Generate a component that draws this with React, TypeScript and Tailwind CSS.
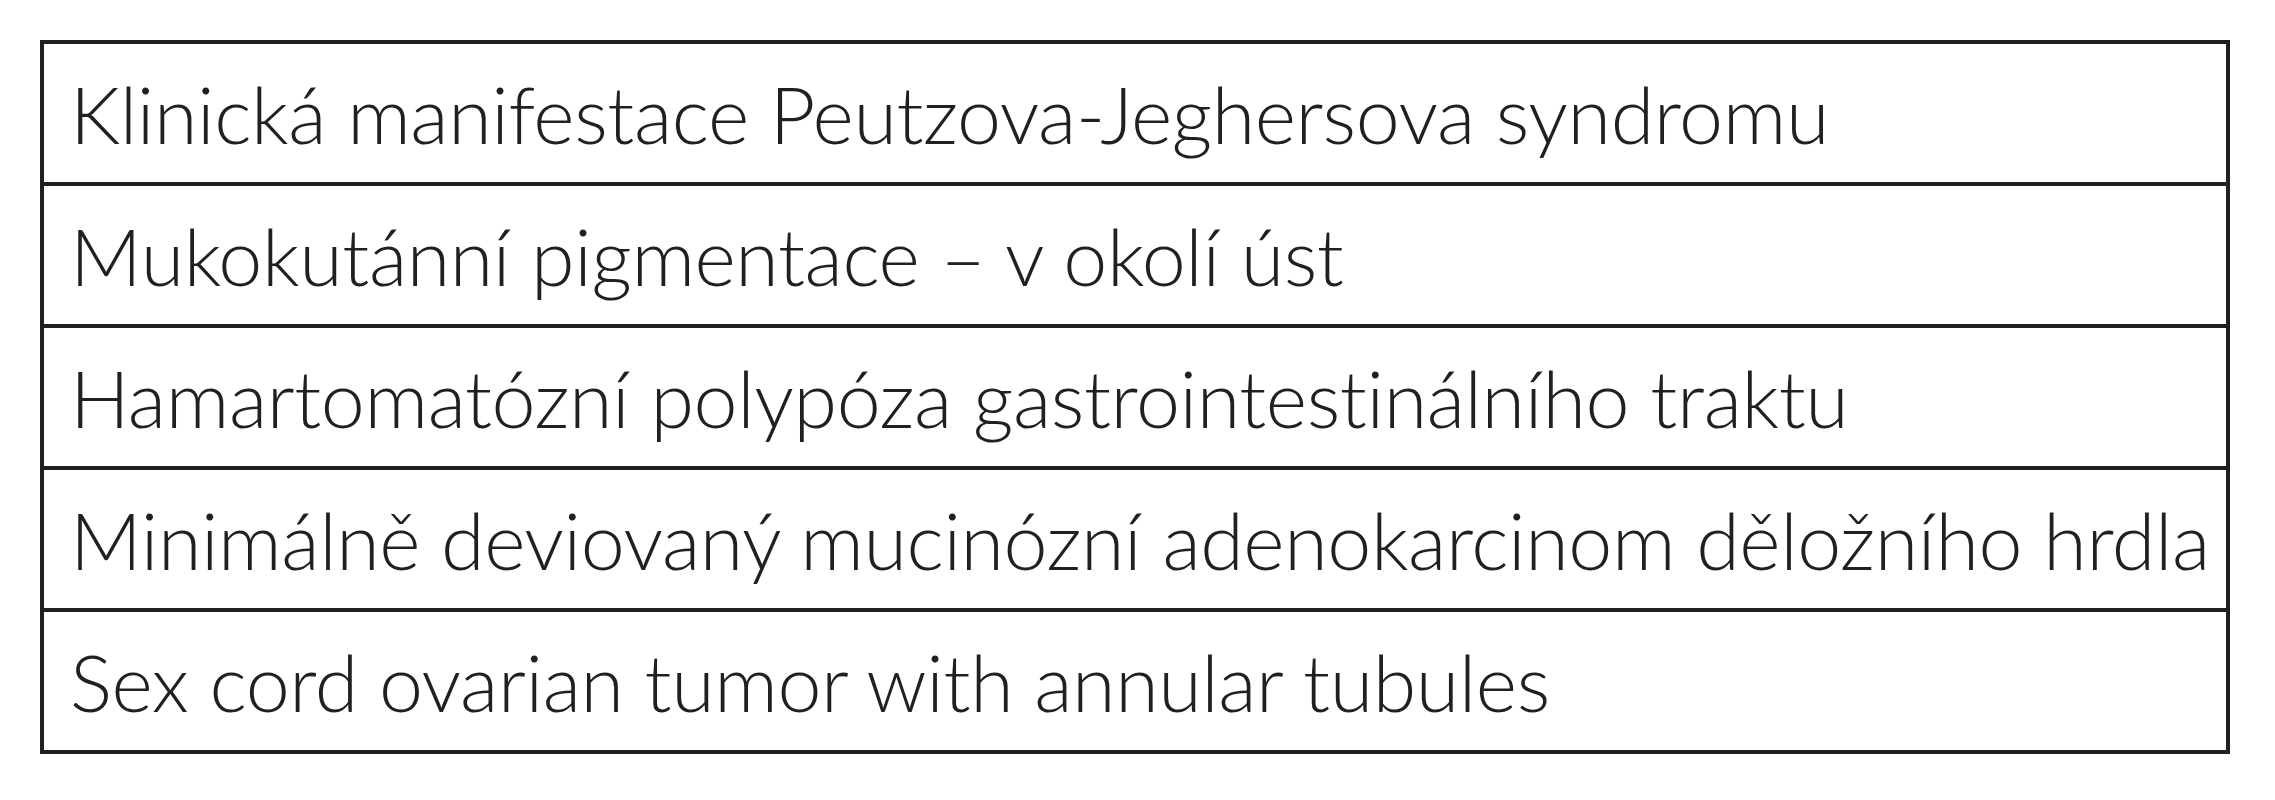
const rows = [
  'Klinická manifestace Peutzova-Jeghersova syndromu',
  'Mukokutánní pigmentace – v okolí úst',
  'Hamartomatózní polypóza gastrointestinálního traktu',
  'Minimálně deviovaný mucinózní adenokarcinom děložního hrdla',
  'Sex cord ovarian tumor with annular tubules',
];

const App = () => {
  return (
    <div className="min-h-screen bg-white pt-[40px] pl-[40px]">
      <div className="w-[2190px] border-4 border-[#231f20]">
        {rows.map((text, i) => (
          <div
            key={i}
            className={
              i < rows.length - 1
                ? 'flex h-[142px] items-center border-b-4 border-[#231f20] pl-[26px]'
                : 'flex h-[138px] items-center pl-[26px]'
            }
          >
            <span className="font-['Lato',sans-serif] text-[79px] font-light leading-none tracking-[-0.4px] text-[#231f20] whitespace-nowrap">
              {text}
            </span>
          </div>
        ))}
      </div>
    </div>
  );
};

export default App;
